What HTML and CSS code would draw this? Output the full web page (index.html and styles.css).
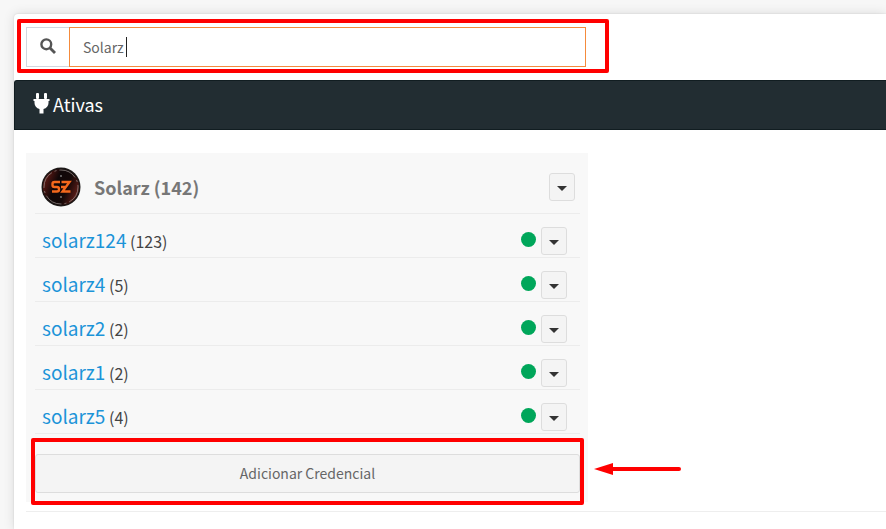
FILE: index.html
```html
<!DOCTYPE html>
<html lang="pt-BR">

<head>
    <meta charset="utf-8">
    <title>Credenciais</title>
    <link rel="stylesheet" href="styles.css">
</head>

<body>
    <main class="page">
        <form class="search">
            <label class="search-icon" for="busca" aria-label="Buscar">
                <svg width="16" height="16" viewBox="0 0 16 16">
                    <circle cx="6.3" cy="6.3" r="4.9" fill="none" stroke="#555" stroke-width="2.4" />
                    <path d="M10 10l5 5" stroke="#555" stroke-width="2.8" />
                </svg>
            </label>
            <div class="search-field">
                <input type="text" id="busca" value="Solarz">
                <span class="cursor"></span>
            </div>
            <span class="mark mark-search"></span>
        </form>

        <h1 class="bar">
            <svg width="17" height="21" viewBox="0 0 17 21" fill="#fff">
                <rect x="3" y="0" width="3" height="6" rx="1" />
                <rect x="11" y="0" width="3" height="6" rx="1" />
                <path d="M0.5 6h16v2h-1v2c0 3-2 5.3-5 6v4.5h-4v-4.5c-3-0.7-5-3-5-6v-2h-1z" />
            </svg>
            Ativas
        </h1>

        <section class="content">
            <div class="card">
                <div class="card-header">
                    <svg class="logo" width="40" height="40" viewBox="0 0 40 40">
                        <defs>
                            <linearGradient id="glow" x1="0" y1="0.3" x2="1" y2="0.7">
                                <stop offset="0" stop-color="#651a14" />
                                <stop offset="0.35" stop-color="#100708" />
                                <stop offset="0.65" stop-color="#140808" />
                                <stop offset="1" stop-color="#68201a" />
                            </linearGradient>
                        </defs>
                        <circle cx="20" cy="20" r="19.5" fill="#1b1716" />
                        <circle cx="20" cy="20" r="18" fill="url(#glow)" />
                        <circle cx="20" cy="20" r="17" fill="none" stroke="#8d8481" stroke-width="0.8" stroke-dasharray="18 3 2 3" />
                        <path d="M19 15h-5.5q-2 0-2 2v1q0 2 2 2h2.5q2 0 2 2v0.500q0 2-2 2h-5M20.5 15h8l-7 9.5h8M20 20h4" fill="none" stroke="#f4681c" stroke-width="2.4" />
                        <path d="M19 9h2M19 30h2" stroke="#aaa" />
                    </svg>
                    <h2>Solarz (142)</h2>
                    <button type="button" class="toggle" aria-label="Opções"><span class="caret"></span></button>
                </div>
                <ul class="list">
                    <li>
                        <p><a href="#">solarz124</a> <span class="count">(123)</span></p>
                        <span class="status"></span>
                        <button type="button" class="toggle" aria-label="Opções"><span class="caret"></span></button>
                    </li>
                    <li>
                        <p><a href="#">solarz4</a> <span class="count">(5)</span></p>
                        <span class="status"></span>
                        <button type="button" class="toggle" aria-label="Opções"><span class="caret"></span></button>
                    </li>
                    <li>
                        <p><a href="#">solarz2</a> <span class="count">(2)</span></p>
                        <span class="status"></span>
                        <button type="button" class="toggle" aria-label="Opções"><span class="caret"></span></button>
                    </li>
                    <li>
                        <p><a href="#">solarz1</a> <span class="count">(2)</span></p>
                        <span class="status"></span>
                        <button type="button" class="toggle" aria-label="Opções"><span class="caret"></span></button>
                    </li>
                    <li>
                        <p><a href="#">solarz5</a> <span class="count">(4)</span></p>
                        <span class="status"></span>
                        <button type="button" class="toggle" aria-label="Opções"><span class="caret"></span></button>
                    </li>
                </ul>
                <div class="card-footer">
                    <button type="button" class="add">Adicionar Credencial</button>
                    <span class="mark mark-add"></span>
                    <svg class="arrow" width="88" height="12" viewBox="0 0 88 12">
                        <path d="M18 6h67" stroke="#f00" stroke-width="4" stroke-linecap="round" />
                        <path d="M0 6l19-6v12z" fill="#f00" />
                    </svg>
                </div>
            </div>
            <hr>
        </section>
    </main>
</body>

</html>
```

FILE: styles.css
```css
* {
    box-sizing: border-box;
}

body {
    margin: 0;
    padding: 14px 0 0 14px;
    background: #f7f7f7;
    font-family: "Noto Sans CJK SC", "Noto Sans", sans-serif;
    font-size: 14px;
    color: #444;
    overflow: hidden;
}

.page {
    min-height: calc(100vh - 14px);
    background: #fff;
    border-radius: 4px 0 0 0;
    box-shadow: 0 0 12px rgba(0, 0, 0, 0.12), 0 0 2px rgba(0, 0, 0, 0.12);
}

.search {
    position: relative;
    display: flex;
    width: 100%;
    max-width: 572px;
    padding: 13px 0 13px 12px;
}

.search-icon {
    display: flex;
    align-items: center;
    justify-content: center;
    width: 43px;
    height: 40px;
    padding-bottom: 2px;
    border: 1px solid #d2d6de;
    border-right: 0;
}

.search-field {
    position: relative;
    flex: 1;
}

.search-field input {
    width: 100%;
    height: 40px;
    padding: 0 13px;
    border: 1px solid #f58b3c;
    border-radius: 0;
    outline: 0;
    font: inherit;
    color: #666;
}

.cursor {
    position: absolute;
    left: 57px;
    top: 10px;
    width: 1px;
    height: 20px;
    background: #222;
}

.mark {
    position: absolute;
    border: 4px solid #f00;
    border-radius: 2px;
    pointer-events: none;
}

.mark-search {
    left: 3px;
    right: -23px;
    top: 5px;
    bottom: 7px;
}

.bar {
    display: flex;
    align-items: center;
    gap: 3px;
    height: 50px;
    margin: 0;
    padding: 0 0 3px 18px;
    background: #222d32;
    border: 1px solid #111d21;
    border-right: 0;
    border-radius: 3px 0 0 0;
    color: #fff;
    font-size: 18px;
    font-weight: normal;
}

.content {
    padding: 23px 0 0 12px;
}

.card {
    max-width: 562px;
    padding: 0 8px 9px 9px;
    background: #f8f8f8;
}

.card-header {
    display: flex;
    align-items: center;
    height: 61px;
    padding: 8px 5px 0 6px;
    border-bottom: 1px solid #ececec;
}

.card-header h2 {
    flex: 1;
    margin: 0 0 0 13px;
    font-size: 18px;
    font-weight: bold;
    color: #777;
}

.list {
    margin: 0;
    padding: 0;
    list-style: none;
}

.list li {
    display: flex;
    align-items: flex-end;
    height: 44px;
    padding: 0 13px 2px 7px;
    border-bottom: 1px solid #ececec;
}

.list p {
    margin: 0;
    font-size: 16px;
    line-height: 28px;
}

.list a {
    color: #1c94d8;
    font-size: 19px;
    text-decoration: none;
}

.status {
    width: 15px;
    height: 15px;
    margin: 0 5px 8px auto;
    border-radius: 50%;
    background: #00a65a;
}

.toggle {
    display: flex;
    align-items: center;
    justify-content: center;
    width: 26px;
    height: 28px;
    padding: 2px 0 0;
    background: #f4f4f4;
    border: 1px solid #ddd;
    border-radius: 3px;
}

.caret {
    border-top: 5px solid #333;
    border-left: 5px solid transparent;
    border-right: 5px solid transparent;
}

.card-footer {
    position: relative;
    padding-top: 20px;
}

.add {
    display: block;
    width: 100%;
    height: 39px;
    padding: 0 0 2px;
    background: #f4f4f4;
    border: 1px solid #ddd;
    border-radius: 3px;
    font: inherit;
    color: #666;
}

.mark-add {
    left: -4px;
    right: -4px;
    top: 4px;
    bottom: -12px;
}

.arrow {
    position: absolute;
    left: calc(100% + 14px);
    top: 29px;
}

hr {
    margin: 9px 0 0;
    border: 0;
    border-top: 1px solid #eee;
}
```
